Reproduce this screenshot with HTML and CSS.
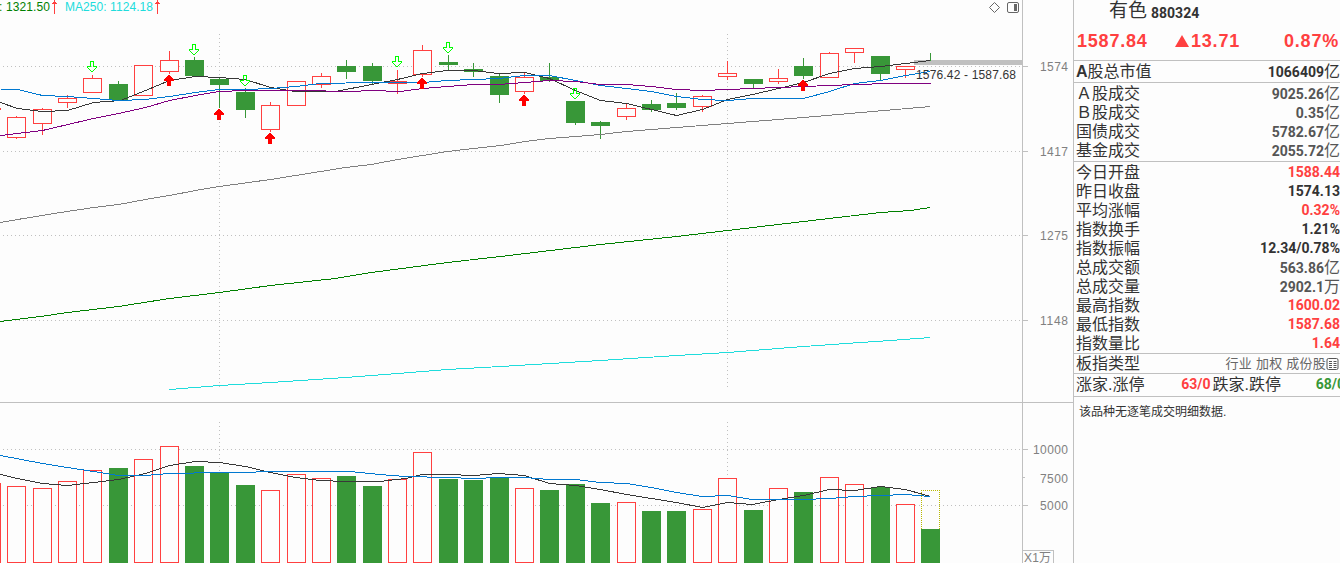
FILE: index.html
```
<!DOCTYPE html>
<html lang="zh-CN">
<head>
  <meta charset="UTF-8" />
  <title>有色 880324</title>
  <link rel="stylesheet" href="styles.css">
</head>
<body>

  <div class="app">
    <svg class="chart" id="chart" width="1073" height="563" viewBox="0 0 1073 563">
      <g id="grid"></g>
      <g class="axis">
        <path d="M1022.5 0V563M1073 0M0 402.5H1073M1023 66.5h5M1023 151.5h5M1023 235.5h5M1023 320.5h5M1023 449.5h5M1023 477.5h2M1023 505.5h5M1023 550.5h30.5V563" />
      </g>
      <rect class="gap" x="914" y="60" width="108" height="5" />
      <g id="candles"></g>
      <g id="volumes"></g>
      <g id="lines"></g>
      <g id="signals"></g>

      <text class="ma60" x="-1" y="11" textLength="51">: 1321.50</text>
      <text class="ma250" x="65" y="11" textLength="88">MA250: 1124.18</text>
      <path class="trend" d="M54.5 0V14M157.5 0V14M52 3.5h5M155 3.5h5M53 2.5h3M156 2.5h3" />
      <text class="range" x="916" y="79" textLength="100">1576.42 - 1587.68</text>
      <g class="scale">
        <text x="1040" y="71" textLength="28">1574</text>
        <text x="1040" y="156" textLength="28">1417</text>
        <text x="1040" y="240" textLength="28">1275</text>
        <text x="1040" y="325" textLength="28">1148</text>
        <text x="1033" y="454" textLength="35">10000</text>
        <text x="1040" y="483" textLength="28">7500</text>
        <text x="1040" y="510" textLength="28">5000</text>
        <text x="1024" y="562" textLength="27">X1万</text>
      </g>
      <g class="tools">
        <path d="M994.5 2.5l5 5l-5 5l-5-5z" />
        <rect x="1007.5" y="2.5" width="11" height="10" rx="1.5" />
        <rect class="tool-fill" x="1014" y="4" width="3" height="7" />
      </g>
    </svg>

    <aside class="quote">
      <header class="name"><span class="stock">有色</span><span class="code">880324</span></header>
      <div class="price"><span class="last">1587.84</span><span class="change"><svg class="tri" width="14" height="12" viewBox="0 0 14 12"><path d="M7 0L14 12H0z" /></svg>13.71</span><span class="pct">0.87%</span></div>

      <section class="block cap">
        <div class="row"><span><b>A</b>股总市值</span><span class="num">1066409<i>亿</i></span></div>
      </section>

      <section class="block deals">
        <div class="row"><span>Ａ股成交</span><span class="num gray">9025.26<i>亿</i></span></div>
        <div class="row"><span>Ｂ股成交</span><span class="num gray">0.35<i>亿</i></span></div>
        <div class="row"><span>国债成交</span><span class="num gray">5782.67<i>亿</i></span></div>
        <div class="row"><span>基金成交</span><span class="num gray">2055.72<i>亿</i></span></div>
      </section>

      <section class="block stats">
        <div class="row"><span>今日开盘</span><span class="num red">1588.44</span></div>
        <div class="row"><span>昨日收盘</span><span class="num">1574.13</span></div>
        <div class="row"><span>平均涨幅</span><span class="num red">0.32%</span></div>
        <div class="row"><span>指数换手</span><span class="num">1.21%</span></div>
        <div class="row"><span>指数振幅</span><span class="num">12.34/0.78%</span></div>
        <div class="row"><span>总成交额</span><span class="num gray">563.86<i>亿</i></span></div>
        <div class="row"><span>总成交量</span><span class="num gray">2902.1<i>万</i></span></div>
        <div class="row"><span>最高指数</span><span class="num red">1600.02</span></div>
        <div class="row"><span>最低指数</span><span class="num red">1587.68</span></div>
        <div class="row"><span>指数量比</span><span class="num red">1.64</span></div>
      </section>

      <section class="block kind">
        <div class="row">
          <span>板指类型</span>
          <span class="tags">行业 加权 成份股<svg width="13" height="12" viewBox="0 0 13 12"><rect x="1" y=".5" width="11" height="11" rx="1.5" /><path d="M3 3.5h3M3 5.5h3M3 7.5h3M3 9.5h3M7.5 3.5h3M7.5 5.5h3M7.5 7.5h3M7.5 9.5h3" /></svg></span>
        </div>
      </section>

      <section class="block breadth">
        <div class="row">
          <span class="up">涨家.涨停</span><span class="num red">63/0</span>
          <span class="down">跌家.跌停</span><span class="num green">68/0</span>
        </div>
      </section>

      <p class="note">该品种无逐笔成交明细数据.</p>
    </aside>
  </div>

  <script src="chart.js"></script>
</body>
</html>
```
FILE: styles.css
```
body {
  margin: 0;
  background: #fdfdfd;
  color: #333;
  font-family: "Liberation Sans", "Noto Sans CJK SC", sans-serif;
  overflow: hidden;
}
.app {
  display: flex;
  width: 1340px;
  height: 563px;
  overflow: hidden;
}

/* chart */
.chart {
  flex: none;
  font-size: 12px;
}
.axis path, .grid {
  fill: none;
  stroke: #c0c0c0;
  shape-rendering: crispEdges;
}
.grid {
  stroke-dasharray: 1 3;
}
.gap { fill: #c0c0c0; }
.up-bar {
  fill: #fdfdfd;
  stroke: #ff4040;
}
.down-bar {
  fill: #389738;
  stroke: #389738;
}
.up-bar, .down-bar, .line, .estimate, .arrow-up, .arrow-down {
  shape-rendering: crispEdges;
}
.estimate {
  fill: none;
  stroke: #b8b800;
  stroke-dasharray: 1 1;
}
.line { fill: none; }
.black { stroke: #383838; }
.blue { stroke: #0078d0; }
.purple { stroke: #800080; }
.silver { stroke: #808080; }
.dark-green { stroke: #008000; }
.cyan { stroke: #20dcdc; }
.arrow-up { fill: #f00; }
.arrow-down {
  fill: none;
  stroke: #0f0;
}
.ma60 { fill: #008000; }
.ma250 { fill: #20dcdc; }
.trend {
  stroke: #ff4040;
  shape-rendering: crispEdges;
}
.range { fill: #333; }
.scale text { fill: #808080; }
.tools path, .tools rect {
  fill: none;
  stroke: #666;
}
.tools .tool-fill {
  fill: #666;
  stroke: none;
}

/* quote panel */
.quote {
  box-sizing: border-box;
  width: 267px;
  border-left: 1px solid #c0c0c0;
  font-size: 16px;
}
.name {
  display: flex;
  align-items: center;
  height: 22px;
  padding-left: 35px;
}
.stock {
  font-size: 19px;
  line-height: 22px;
}
.code {
  margin: 4px 0 0 4px;
  font: bold 14px Roboto, sans-serif;
}
.price {
  display: flex;
  align-items: center;
  height: 38px;
  padding: 0 1px 0 3px;
  font-size: 18px;
  font-weight: bold;
  letter-spacing: 0.8px;
  color: #ff4040;
}
.last { width: 98px; }
.pct { margin-left: auto; }
.tri {
  margin-right: 2px;
  fill: #ff4040;
}
.block {
  border-top: 1px solid #c0c0c0;
}
.row {
  display: flex;
  justify-content: space-between;
  align-items: center;
  height: 19px;
  padding-left: 2px;
  line-height: 19px;
  white-space: nowrap;
}
.cap .row { height: 21px; }
.deals, .stats { padding-top: 1px; }
.deals { padding-bottom: 1px; }
.num {
  font: bold 14px/19px Roboto, "Noto Sans CJK SC", sans-serif;
}
.num i {
  font-size: 16px;
  font-style: normal;
  font-weight: normal;
}
.red { color: #ff4040; }
.gray { color: #555; }
.green { color: #389738; }
.tags {
  display: flex;
  align-items: center;
  padding-right: 1px;
  font-size: 13px;
  letter-spacing: 0.25px;
  color: #666;
}
.tags svg {
  fill: none;
  stroke: #555;
}
.breadth {
  border-bottom: 1px solid #c0c0c0;
}
.breadth .row {
  height: 20px;
  padding-bottom: 2px;
}
.breadth .up { width: 103px; }
.breadth .down { width: 101px; }
.breadth .row .num { margin-left: 0; }
.breadth .green { margin-right: -5px; }
.note {
  margin: 5px 0 0 5px;
  font-size: 12px;
  line-height: 20px;
}
```
FILE: chart.js
```
const NS = 'http://www.w3.org/2000/svg';
const W = 19;

// left, direction, body top, body bottom, high, low, volume top
const bars = [
  [-18, 'up', 108, 109, 107, 110, 483],
  [7, 'up', 117, 137, 116, 138, 486],
  [33, 'up', 109, 123, 108, 134, 488],
  [58, 'up', 98, 102, 95, 107, 481],
  [83, 'up', 78, 92, 75, 92, 470],
  [109, 'down', 84, 99, 81, 99, 468],
  [134, 'up', 65, 95, 65, 95, 459],
  [160, 'up', 60, 71, 51, 73, 446],
  [185, 'down', 60, 75, 57, 75, 466],
  [210, 'down', 79, 84, 78, 107, 473],
  [236, 'down', 92, 109, 88, 117, 485],
  [261, 'up', 105, 129, 102, 131, 490],
  [287, 'up', 81, 105, 81, 105, 474],
  [312, 'up', 76, 84, 73, 87, 478],
  [337, 'down', 66, 71, 60, 78, 476],
  [363, 'down', 66, 80, 63, 83, 486],
  [388, 'up', 81, 83, 70, 93, 479],
  [413, 'up', 50, 74, 45, 76, 452],
  [439, 'down', 62, 64, 55, 70, 479],
  [464, 'down', 69, 71, 63, 76, 480],
  [490, 'down', 76, 94, 74, 102, 477],
  [515, 'up', 77, 91, 73, 93, 488],
  [540, 'down', 77, 80, 63, 81, 490],
  [566, 'down', 101, 122, 101, 124, 484],
  [591, 'down', 122, 125, 121, 138, 503],
  [617, 'up', 108, 116, 104, 119, 502],
  [642, 'down', 104, 109, 100, 111, 511],
  [667, 'down', 103, 107, 93, 109, 511],
  [693, 'up', 96, 106, 95, 111, 509],
  [718, 'up', 73, 76, 61, 79, 478],
  [744, 'down', 79, 83, 79, 88, 510],
  [769, 'up', 78, 81, 69, 83, 488],
  [794, 'down', 66, 75, 58, 78, 492],
  [820, 'up', 53, 77, 52, 77, 477],
  [845, 'up', 48, 52, 48, 62, 484],
  [871, 'down', 56, 73, 56, 79, 487],
  [896, 'up', 66, 69, 66, 77, 504],
  [921, 'down', 59, 59, 53, 60, 529]
];

const lines = [
  ['silver', '0,222 17,219 60,212 93,207 118,204 145,199 169,195 195,190 219,186 270,179 345,167 371,164 397,159 447,151 473,148 500,145 525,141 549,138 575,136 600,134 626,131 676,127 727,123 803,117 930,106'],
  ['dark-green', '0,321 40,316 67,312 118,306 169,298 219,292 270,285 335,278 371,272 447,262 500,256 600,244 676,236 727,230 803,221 880,212 910,210 930,207'],
  ['cyan', '169,389 219,385 270,382 345,377 397,373 447,369 500,366 600,360 676,355 727,352 803,346 860,342 890,340 930,337'],
  ['black', '0,102 17,108 42,111 67,110 93,102 120,100 145,90 169,80 195,76 219,77 245,79 270,87 295,91 335,91 371,84 397,79 422,73 447,70 473,70 498,73 524,72 549,78 575,90 600,100 626,103 651,109 676,115 702,109 727,99 752,94 778,88 803,82 829,73 854,68 880,66 905,63 930,60'],
  ['blue', '0,89 17,89 42,95 67,96 93,98 118,100 145,99 169,96 195,92 219,89 245,89 270,88 295,86 320,83 371,82 422,82 447,80 473,79 498,78 524,75 549,75 575,80 600,85 626,88 651,91 676,96 702,99 727,100 752,98 803,98 829,91 854,83 880,80 905,75 930,71'],
  ['purple', '0,135 42,130 93,118 118,113 145,107 169,100 195,95 219,91 245,90 300,90 350,91 371,90 400,91 422,88 447,86 473,84 498,84 524,82 549,80 575,81 600,84 626,84 651,86 676,89 702,90 727,89 752,88 778,87 829,85 854,84 890,83 930,83'],
  // volume averages
  ['black', '0,474 17,478 42,483 67,485 93,482 118,479 145,473 169,465 195,461 219,462 245,466 270,472 295,477 320,480 345,481 379,481 405,478 422,474 447,474 473,475 498,473 524,475 549,483 575,485 600,489 626,494 651,498 676,502 702,507 727,502 752,504 778,499 803,495 829,489 854,490 880,486 905,489 930,496'],
  ['blue', '0,455 42,463 67,467 93,471 118,475 145,475 169,473 219,472 295,471 350,471 379,474 405,476 447,477 473,478 498,477 524,477 549,479 575,479 600,482 626,483 651,487 676,492 702,496 727,495 752,499 778,499 803,499 829,498 854,496 880,495 905,494 930,496']
];

const buys = [[169, 75], [219, 109], [270, 133], [422, 78], [524, 95], [803, 80]];
const sells = [[92, 61], [194, 44], [245, 75], [397, 56], [448, 42], [575, 88]];

function add(parent, tag, cls, attrs) {
  const el = document.createElementNS(NS, tag);
  el.setAttribute('class', cls);
  for (const key in attrs) el.setAttribute(key, attrs[key]);
  document.getElementById(parent).appendChild(el);
}

[66, 151, 235, 320, 449, 505].forEach(y => add('grid', 'path', 'grid', { d: `M3 ${y + 0.5}H1022` }));
[219, 727].forEach(x => {
  add('grid', 'path', 'grid', { d: `M${x + 0.5} 34V388` });
  add('grid', 'path', 'grid', { d: `M${x + 0.5} 422V563` });
});

bars.forEach(([x, dir, top, bottom, high, low, vol]) => {
  const cls = dir + '-bar';
  const cx = x + 9.5;
  add('candles', 'path', cls, { d: `M${cx} ${high}V${top}M${cx} ${bottom}V${low + 1}` });
  add('candles', 'rect', cls, { x: x + 0.5, y: top + 0.5, width: W - 1, height: bottom - top });
  add('volumes', 'rect', cls, { x: x + 0.5, y: vol + 0.5, width: W - 1, height: 562 - vol });
});
// projected volume of the unfinished day
add('volumes', 'path', 'estimate', { d: 'M921.5 529V490.5H939.5V529' });

lines.forEach(([color, pts]) => {
  const points = pts.split(' ').map(p => p.split(',').map(v => +v + 0.5).join(',')).join(' ');
  add('lines', 'polyline', 'line ' + color, { points });
});

buys.forEach(([x, y]) => {
  add('signals', 'path', 'arrow-up', { d: `M${x - 1} ${y}h2v1h1v1h1v1h1v1h1v2h-3v5h-4v-5h-3v-2h1v-1h1v-1h1v-1h1z` });
});
sells.forEach(([x, y]) => {
  add('signals', 'path', 'arrow-down', { d: `M${x - 1.5} ${y + 0.5}h3v5h3v1l-4 4h-1l-4-4v-1h3z` });
});
```
